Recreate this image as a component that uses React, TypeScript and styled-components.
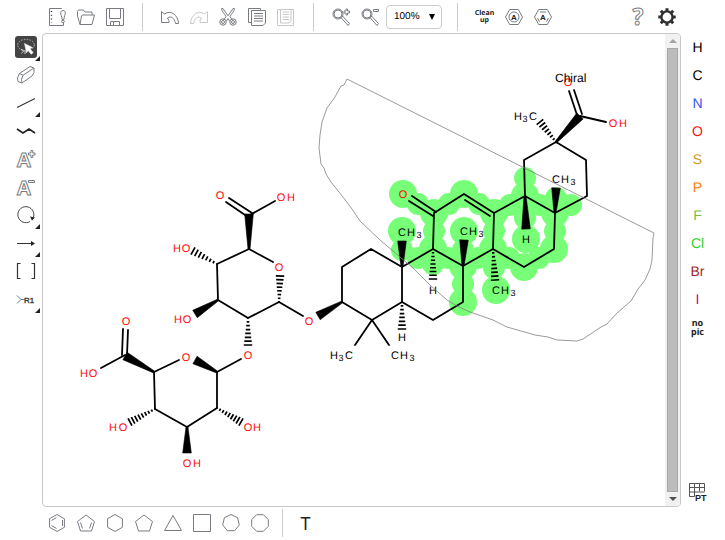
import React from "react";
import styled, { createGlobalStyle } from "styled-components";

const GlobalStyle = createGlobalStyle`
  * { box-sizing: border-box; }
  body { margin: 0; background: #fff; color: #333; font-family: "Liberation Sans", Arial, sans-serif; }
`;

const Page = styled.div`
  display: grid;
  grid-template-columns: 42px minmax(0, 1fr) 44px;
  grid-template-rows: 33px minmax(0, 1fr) 33px;
  height: 100vh;
`;

const TopBar = styled.header`
  grid-column: 1 / -1;
  display: flex;
  align-items: center;
  padding: 0 44px 0 42px;
`;

const BottomBar = styled.footer`
  grid-column: 1 / -1;
  display: flex;
  align-items: flex-start;
  padding: 2px 42px 0;
`;

const SideBar = styled.nav`
  display: flex;
  flex-direction: column;
  align-items: center;
`;

const LeftBar = styled(SideBar)`
  padding-left: 10px;
`;

const RightBar = styled(SideBar)`
  padding-right: 11px;
`;

const Spacer = styled.div`
  flex: 1;
`;

const Separator = styled.div<{ $tight?: boolean }>`
  width: 1px;
  height: 28px;
  background: #ccc;
  margin: ${(p) => (p.$tight ? "0 8px" : "0 12px 0 13px")};
`;

const IconButton = styled.button<{ $off?: boolean }>`
  display: flex;
  align-items: center;
  justify-content: center;
  width: 29px;
  height: 28px;
  padding: 0;
  border: 0;
  background: none;
  color: ${(p) => (p.$off ? "#c8c8c8" : "#787c82")};
  flex: none;
`;

const ToolButton = styled(IconButton)`
  position: relative;
  width: 28px;
`;

const ToolFace = styled.span<{ $active?: boolean }>`
  display: flex;
  align-items: center;
  justify-content: center;
  width: 22px;
  height: 22px;
  border-radius: 3px;
  background: ${(p) => (p.$active ? "#444" : "transparent")};
`;

const Corner = styled.span`
  position: absolute;
  right: 0;
  bottom: 0;
  border-left: 5px solid transparent;
  border-bottom: 5px solid #222;
`;

const ElementButton = styled(IconButton)<{ $color: string }>`
  color: ${(p) => p.$color};
  font: 14px "Liberation Sans", Arial, sans-serif;
  text-rendering: geometricPrecision;
`;

const WordButton = styled(IconButton)<{ $large?: boolean }>`
  color: #222;
  font: bold ${(p) => (p.$large ? "9px / 9px" : "7px / 7px")} "Noto Sans", "Open Sans", sans-serif;
  text-rendering: geometricPrecision;
  text-align: center;
`;

const TextButton = styled(IconButton)`
  color: #222;
  font: 18px "Noto Sans", "Open Sans", sans-serif;
`;

const TableButton = styled(IconButton)`
  margin-bottom: 1px;
`;

const ZoomBox = styled.div`
  position: relative;
  margin: 0 2px;
`;

const ZoomSelect = styled.select`
  appearance: none;
  display: block;
  width: 56px;
  height: 24px;
  padding: 0 7px;
  border: 1px solid #ccc;
  border-radius: 4px;
  background: #fff;
  color: #000;
  font: 10px "Liberation Sans", Arial, sans-serif;
  text-rendering: geometricPrecision;
`;

const ZoomArrow = styled.span`
  position: absolute;
  right: 7px;
  top: 9px;
  border: 3px solid transparent;
  border-top: 6px solid #000;
  border-bottom: 0;
  pointer-events: none;
`;

const Canvas = styled.main`
  display: flex;
  border: 1px solid #c8c8c8;
  border-radius: 4px;
  overflow: hidden;
`;

const Sheet = styled.svg`
  flex: 1;
  min-width: 0;
  height: 100%;
  font-family: "Liberation Sans", Arial, sans-serif;
  text-rendering: geometricPrecision;
`;

const ScrollTrack = styled.div`
  display: flex;
  flex-direction: column;
  align-items: center;
  width: 15px;
  background: #f1f1f1;
`;

const ScrollArrow = styled.div<{ $down?: boolean }>`
  display: flex;
  align-items: center;
  justify-content: center;
  height: 14px;
  &::after {
    content: "";
    border: 4px solid transparent;
    ${(p) => (p.$down ? "border-top-color: #505050; border-bottom: 0;" : "border-bottom-color: #a3a3a3; border-top: 0;")}
  }
`;

const ScrollThumb = styled.div`
  flex: 1;
  width: 11px;
  background: #bcbcbc;
  border: 1px solid #a8a8a8;
`;

/* ---------- icons ---------- */

const Icon = ({ children }: { children: React.ReactNode }) => (
  <svg width="18" height="18" viewBox="0 0 18 18" fill="none" stroke="currentColor" strokeWidth="1" aria-hidden="true" overflow="visible">
    {children}
  </svg>
);

const OutlineLetter = styled.text`
  font-family: "Open Sans", "Noto Sans", sans-serif;
  font-weight: bold;
  fill: #fff;
  stroke-width: 1px;
`;

const icons: Record<string, React.ReactNode> = {
  new: (
    <>
      <path d="M13.500 1V.5H1.500V17.500H15.500V15" />
      <path d="M3.500 3v12" strokeDasharray="1 2.800" strokeWidth="1.400" stroke="#333" />
      <path d="M15 2.500c1.300 0 2.300.9 2.300 2.300 0 2-1.100 3.500-1.400 6.700h-1.800c-.3-3.200-1.400-4.700-1.400-6.700 0-1.400 1-2.300 2.300-2.300z" />
      <circle cx="15" cy="13.500" r="1.300" />
    </>
  ),
  open: <path d="M3 16.500L.5 8V3.500l1-1.500h5l1.500 2h7v3M3 16.500h12L17.500 7h-12L4.500 8z" />,
  save: (
    <>
      <path d="M.5.500h17v17H.5z" />
      <path d="M3.500.5v10h11V.5M4.500 17.500v-4h9v4M7.500 14v3" />
    </>
  ),
  undo: <path d="M.5 3.500l3 2.500C10 1.500 17 7 17.500 15.500h-3C13.500 10 10 7.500 6.500 10l1.500 2.500v2H.5z" />,
  redo: <path d="M17.500 3.500l-3 2.500C8 1.500 1 7 .5 15.500h3C4.500 10 8 7.500 11.500 10L10 12.500v2h7.500z" />,
  cut: (
    <>
      <path d="M2.500.500L4 .6l5 7.200 5-7.200 1.500-.1c0 2-3 5.500-4.600 8.200l2.600 3M2.500.500c0 2 3 5.500 4.600 8.200L4.500 12M9 10.500L7.500 13M9 10.500l1.500 2.500" />
      <circle cx="4" cy="14" r="3.200" /><circle cx="4" cy="14" r="1.500" />
      <circle cx="14" cy="14" r="3.200" /><circle cx="14" cy="14" r="1.500" />
    </>
  ),
  copy: (
    <>
      <path d="M3.500 14.500h-3V.5h12v2" />
      <path d="M3.500 2.500h14V15L15 17.500H3.500zM6 5.500h9M6 8h9M6 10.500h9M6 13h9" />
    </>
  ),
  paste: (
    <>
      <path d="M.5 1.500h16v16H.5z" />
      <path d="M3.500 1v14h8.500l2-2V1M5.500 4h6.500M5.500 6.500h6.500M5.500 9h6.500M5.500 11.500h6.500" />
    </>
  ),
  zoomIn: (
    <>
      <circle cx="6" cy="6" r="5" /><circle cx="6" cy="6" r="4" />
      <path d="M9.500 9l1-1 7 7.500-1.500 2-7-8zM14 1v2h-2v2h2v2h1.500V5h2V3h-2V1z" />
    </>
  ),
  zoomOut: (
    <>
      <circle cx="6" cy="6" r="5" /><circle cx="6" cy="6" r="4" />
      <path d="M9.500 9l1-1 7 7.500-1.500 2-7-8zM12.500 1.500h5v2h-5z" />
    </>
  ),
  arom: (
    <>
      <path d="M4.700 1.500h8.600L17.500 9l-4.200 7.500H4.700L.5 9z" />
      <circle cx="9" cy="9" r="5" />
      <text x="9" y="12" fontSize="8" fontWeight="bold" textAnchor="middle" fill="#222" stroke="none">A</text>
    </>
  ),
  dearom: (
    <>
      <path d="M4.700 1.500h8.600L17.500 9l-4.200 7.500H4.700L.5 9zM6 4h6M3.500 10l2 3.800M14.500 10l-2 3.800" />
      <text x="9" y="12" fontSize="8" fontWeight="bold" textAnchor="middle" fill="#222" stroke="none">A</text>
    </>
  ),
  help: <OutlineLetter x="9" y="17" fontSize="23" textAnchor="middle">?</OutlineLetter>,
  gear: (
    <g stroke="#303030">
      <circle cx="9" cy="9" r="5.600" strokeWidth="2.400" />
      <path
        strokeWidth="3"
        d="M9 .3v2.700M9 15v2.700M.3 9H3M15 9h2.700M2.800 2.800l1.900 1.900M13.300 13.300l1.900 1.900M2.800 15.200l1.900-1.900M13.300 4.700l1.900-1.900"
      />
    </g>
  ),
  lasso: (
    <>
      <ellipse cx="9" cy="7" rx="8.300" ry="5.700" stroke="#b5b5b5" strokeDasharray="1.500 1.300" />
      <path d="M4 11.500l3 1-2.500 3M8 13v3" stroke="#ccc" />
      <path d="M7.500 5.500l8 4-2.500 1.300 3.200 3.700-2 1.700-3.200-3.700-1.500 2.300z" fill="#fff" stroke="#eee" strokeWidth=".6" />
    </>
  ),
  erase: <path d="M.5 12l2-4.500L13 .500l4 1.500v4.500l-2 3.500L5 17l-4-1.500zM2.500 7.500l3.500 1.800L17 2M6 9.300l-1.500 4L5 17" />,
  bond: <path d="M0 13.500L18 4.500" stroke="#333" strokeWidth="1.200" />,
  chain: <path d="M0 7l6 4 6-4 6 4" stroke="#222" strokeWidth="1.600" />,
  plus: (
    <>
      <OutlineLetter x="0" y="17" fontSize="20">A</OutlineLetter>
      <path d="M14 .5v2.500h-2.500v2H14v2.500h1.700V5h2.300V3h-2.300V.5z" fill="#fff" />
    </>
  ),
  minus: (
    <>
      <OutlineLetter x="0" y="17" fontSize="20">A</OutlineLetter>
      <path d="M11.500 2.500h6v2h-6z" fill="#fff" />
    </>
  ),
  rotate: (
    <>
      <path d="M13 15.500A8 8 0 1 1 16.500 11" stroke="#444" />
      <path d="M13 10.500l5 1-3 3z" fill="#222" stroke="none" />
    </>
  ),
  arrow: (
    <>
      <path d="M0 9.500h16" stroke="#333" />
      <path d="M14 7l4 2.500-4 2.500z" fill="#222" stroke="none" />
    </>
  ),
  bracket: <path d="M3.500 1.500h-3v15h3M14.500 1.500h3v15h-3" stroke="#333" strokeWidth="1.200" />,
  rgroup: (
    <>
      <path d="M0 5.500l4 4-4 4M4 9.500h3.500" stroke="#5577a8" />
      <text x="7" y="12.500" fontSize="8" stroke="#333" strokeWidth=".3" fill="#222">R1</text>
    </>
  ),
  table: (
    <>
      <path d="M.5.500h15v8M.5.500v13h5v-13M10.500.5v8M.5 4.500h15M.5 9h15" stroke="#555" />
      <text x="6" y="17.500" fontSize="9" fontWeight="bold" fill="#222" stroke="none">PT</text>
    </>
  ),
};

const ring = (n: number, start: number, r = 8.5) =>
  Array.from({ length: n }, (_, i) => {
    const a = ((start + (360 * i) / n) * Math.PI) / 180;
    return `${(9 + r * Math.cos(a)).toFixed(1)},${(9 + r * Math.sin(a)).toFixed(1)}`;
  }).join(" ");

const templates: { name: string; points: string; inner?: string }[] = [
  { name: "Benzene", points: ring(6, -90), inner: "M3.500 6.500L8.500 3.500M14.500 6v6M3.500 11.500l5 3" },
  { name: "Cyclopentadiene", points: "9,1 17.500,7.500 14.500,17 3.500,17 .5,7.500", inner: "M3.500 8.500l2 6M14.500 8.500l-2 6" },
  { name: "Cyclohexane", points: ring(6, -90) },
  { name: "Cyclopentane", points: "9,1 17.500,7.500 14.500,17 3.500,17 .5,7.500" },
  { name: "Cyclopropane", points: "9,1.500 17.500,16.500 .5,16.500" },
  { name: "Cyclobutane", points: ".5,.5 17.500,.5 17.500,17.500 .5,17.500" },
  { name: "Cycloheptane", points: ring(7, -90) },
  { name: "Cyclooctane", points: ring(8, -112.5, 9) },
];

const leftTools: [string, string, boolean][] = [
  ["lasso", "Lasso selection", true],
  ["erase", "Erase", false],
  ["bond", "Single bond", true],
  ["chain", "Chain", false],
  ["plus", "Charge plus", false],
  ["minus", "Charge minus", false],
  ["rotate", "Rotate", true],
  ["arrow", "Reaction arrow", true],
  ["bracket", "S-group", false],
  ["rgroup", "R-group label", true],
];

const elements: [string, string][] = [
  ["H", "#000"], ["C", "#000"], ["N", "#304ff7"], ["O", "#ff0d0d"], ["S", "#c99a19"],
  ["P", "#ff8000"], ["F", "#6fbf44"], ["Cl", "#1fd01f"], ["Br", "#a62929"], ["I", "#c0008f"],
];

/* ---------- molecule ---------- */

type Pt = [number, number];
type Pair = [Pt, Pt];

const atom: Record<string, Pt> = {
  a1: [556, 142], a2: [524, 160], a3: [525, 196], a4: [555, 213], a5: [587, 196], a6: [586, 160],
  b1: [494, 213], b2: [493, 249], b3: [524, 267], b4: [554, 249],
  c1: [464, 194], c2: [434, 213], c3: [433, 249], c4: [463, 266],
  d1: [402, 267], d2: [402, 302], d3: [433, 320], d4: [463, 302],
  e1: [371, 249], e2: [342, 267], e3: [342, 302], e4: [372, 320],
  s1: [249, 249], s2: [217, 264], s3: [218, 300], s4: [248, 318], s5: [279, 302],
  t1: [217, 372], t2: [154, 372], t3: [155, 409], t4: [187, 427], t5: [217, 408],
};

const chains = [
  "a1 a2 a3 a4 a5 a6 a1", "a3 b1 b2 b3 b4 a4", "b1 c1 c2 c3 c4 b2",
  "c3 d1 d2 d3 d4 c4", "d1 e1 e2 e3 e4 d2", "s1 s2 s3 s4 s5", "t2 t3 t4 t5 t1",
];

const bonds: Pair[] = [
  [[465, 200], [490, 216]],
  [[412, 196], [436, 212]], [[409, 201], [433, 216]],
  [[569, 91], [577, 115]], [[574, 90], [582, 114]],
  [[580, 116], [606, 122]],
  [[372, 320], [355, 345]], [[372, 320], [389, 345]],
  [[229, 198], [252, 213]], [[226, 202], [248, 217]],
  [[250, 215], [275, 201]],
  [[249, 249], [273, 262]], [[279, 302], [303, 316]],
  [[217, 372], [241, 359]], [[154, 372], [179, 360]],
  [[123, 329], [122, 355]], [[128, 330], [127, 355]],
  [[125, 355], [101, 368]],
];

const wedges: Pair[] = [
  [atom.a1, [580, 116]], [atom.a3, [526, 229]], [atom.a4, [556, 188]],
  [atom.c4, [464, 240]], [atom.d1, [402, 241]], [atom.e3, [318, 316]],
  [atom.s1, [249, 214]], [atom.s3, [195, 314]],
  [atom.t1, [195, 360]], [atom.t2, [125, 356]], [atom.t4, [187, 453]],
];

const hashes: Pair[] = [
  [atom.a1, [540, 122]], [atom.b2, [495, 280]], [atom.c3, [433, 279]], [atom.d2, [402, 329]],
  [atom.s2, [193, 251]], [atom.s4, [248, 345]], [atom.s5, [280, 276]],
  [atom.t3, [130, 422]], [atom.t5, [241, 422]],
];

const selectedAtoms: Pt[] = [
  [403, 194], atom.c1, atom.c2, atom.c3, atom.c4, atom.b1, atom.b2, atom.b3, atom.b4,
  atom.a3, atom.a4, atom.d4, [402, 231], [464, 231], [526, 239], [496, 290],
];

const selectedBonds: Pt[] = [
  [418, 204], [449, 204], [479, 204], [434, 231], [494, 231], [448, 258], [478, 258],
  [510, 205], [540, 205], [555, 231], [539, 258], [509, 258], [525, 178], [571, 205],
  [556, 198], [525, 218], [463, 250], [463, 284], [402, 250], [418, 258], [433, 264], [494, 268],
];

type Glyph = [string, number];
const RED = "#ff0d0d";
const labels: { y: number; color?: string; glyphs: Glyph[] }[] = [
  { y: 82, color: RED, glyphs: [["O", 568]] },
  { y: 123, color: RED, glyphs: [["O", 613], ["H", 623]] },
  { y: 116, glyphs: [["H", 518], ["3", 525], ["C", 533]] },
  { y: 179, glyphs: [["C", 556], ["H", 565], ["3", 573]] },
  { y: 194, color: RED, glyphs: [["O", 403]] },
  { y: 232, glyphs: [["C", 402], ["H", 411], ["3", 419]] },
  { y: 231, glyphs: [["C", 464], ["H", 473], ["3", 481]] },
  { y: 239, glyphs: [["H", 526]] },
  { y: 290, glyphs: [["C", 496], ["H", 505], ["3", 513]] },
  { y: 290, glyphs: [["H", 433]] },
  { y: 337, glyphs: [["H", 402]] },
  { y: 355, glyphs: [["H", 334], ["3", 341], ["C", 349]] },
  { y: 355, glyphs: [["C", 395], ["H", 404], ["3", 412]] },
  { y: 195, color: RED, glyphs: [["O", 220]] },
  { y: 197, color: RED, glyphs: [["O", 281], ["H", 291]] },
  { y: 248, color: RED, glyphs: [["H", 177], ["O", 186]] },
  { y: 267, color: RED, glyphs: [["O", 279]] },
  { y: 319, color: RED, glyphs: [["H", 178], ["O", 187]] },
  { y: 321, color: RED, glyphs: [["O", 309]] },
  { y: 355, color: RED, glyphs: [["O", 248]] },
  { y: 357, color: RED, glyphs: [["O", 186]] },
  { y: 321, color: RED, glyphs: [["O", 126]] },
  { y: 373, color: RED, glyphs: [["H", 84], ["O", 93]] },
  { y: 427, color: RED, glyphs: [["H", 113], ["O", 123]] },
  { y: 427, color: RED, glyphs: [["O", 248], ["H", 257]] },
  { y: 463, color: RED, glyphs: [["O", 187], ["H", 197]] },
];

const LASSO =
  "M347 79L344 85 341 86 335 97 327 108 322 122 320 135 319 148 321 164 324 168 326 174 331 182 343 197 352 209 360 221 380 240 400 257 413 268 430 285 447 300 457 306 470 312 493 320 507 327 535 335 548 337 557 340 577 341 583 339 601 327 607 324 617 313 631 301 638 289 645 280 650 269 652 260 653 238 654 233Z";

const wedgePath = ([[x1, y1], [x2, y2]]: Pair) => {
  const len = Math.hypot(x2 - x1, y2 - y1);
  const nx = -(y2 - y1) / len;
  const ny = (x2 - x1) / len;
  return `M${x1 + nx} ${y1 + ny}L${x2 + nx * 4.3} ${y2 + ny * 4.3}L${x2 - nx * 4.3} ${y2 - ny * 4.3}L${x1 - nx} ${y1 - ny}Z`;
};

const hashPath = ([[x1, y1], [x2, y2]]: Pair) => {
  const len = Math.hypot(x2 - x1, y2 - y1);
  const nx = -(y2 - y1) / len;
  const ny = (x2 - x1) / len;
  const count = Math.round(len / 3.7);
  let d = "";
  for (let i = 0; i <= count; i++) {
    const t = i / count;
    const w = 0.8 + 3.4 * t;
    const x = x1 + (x2 - x1) * t;
    const y = y1 + (y2 - y1) * t;
    d += `M${x + nx * w} ${y + ny * w}L${x - nx * w} ${y - ny * w}`;
  }
  return d;
};

const Molecule = () => (
  <Sheet role="img" aria-label="Chemical structure">
    <g transform="translate(-43 -34)">
      <g fill="#77ff77">
        {selectedAtoms.map(([x, y]) => <circle key={`${x}-${y}`} cx={x} cy={y} r="14" />)}
        {selectedBonds.map(([x, y]) => <circle key={`${x}-${y}`} cx={x} cy={y} r="11" />)}
      </g>
      <g fill="none" stroke="#000" strokeWidth="1.800" strokeLinecap="round" strokeLinejoin="round">
        {chains.map((c) => <polyline key={c} points={c.split(" ").map((k) => atom[k].join()).join(" ")} />)}
        {bonds.map(([a, b]) => <path key={`${a}-${b}`} d={`M${a}L${b}`} />)}
      </g>
      {wedges.map((w) => <path key={`${w}`} d={wedgePath(w)} fill="#000" stroke="#000" strokeWidth=".6" />)}
      {hashes.map((h) => <path key={`${h}`} d={hashPath(h)} stroke="#000" strokeWidth="1.700" />)}
      {labels.map(({ y, color = "#000", glyphs }) =>
        glyphs.map(([ch, x]) => (
          <text key={`${x}-${y}`} x={x} y={ch === "3" ? y + 6 : y + 4} fontSize={ch === "3" ? 9 : 11} textAnchor="middle" fill={color}>
            {ch}
          </text>
        )),
      )}
      <text x="555" y="82" fontSize="12">Chiral</text>
      <path d={LASSO} fill="none" stroke="#808080" strokeWidth=".8" />
    </g>
  </Sheet>
);

const Tool = ({ icon, label, off }: { icon: string; label: string; off?: boolean }) => (
  <IconButton aria-label={label} disabled={off} $off={off}>
    <Icon>{icons[icon]}</Icon>
  </IconButton>
);

export default function App() {
  return (
    <>
      <GlobalStyle />
      <Page>
        <TopBar>
          <Tool icon="new" label="New" />
          <Tool icon="open" label="Open" />
          <Tool icon="save" label="Save" />
          <Separator />
          <Tool icon="undo" label="Undo" />
          <Tool icon="redo" label="Redo" off />
          <Tool icon="cut" label="Cut" />
          <Tool icon="copy" label="Copy" />
          <Tool icon="paste" label="Paste" off />
          <Separator />
          <Tool icon="zoomIn" label="Zoom in" />
          <Tool icon="zoomOut" label="Zoom out" />
          <ZoomBox>
            <ZoomSelect aria-label="Zoom" defaultValue="100%">
              <option>50%</option>
              <option>100%</option>
              <option>200%</option>
            </ZoomSelect>
            <ZoomArrow />
          </ZoomBox>
          <Separator />
          <WordButton>Clean<br />up</WordButton>
          <Tool icon="arom" label="Aromatize" />
          <Tool icon="dearom" label="Dearomatize" />
          <Spacer />
          <Tool icon="help" label="Help" />
          <Tool icon="gear" label="Settings" />
        </TopBar>

        <LeftBar aria-label="Tools">
          {leftTools.map(([icon, label, more]) => (
            <ToolButton key={icon} aria-label={label}>
              <ToolFace $active={icon === "lasso"}>
                <Icon>{icons[icon]}</Icon>
              </ToolFace>
              {more && <Corner />}
            </ToolButton>
          ))}
        </LeftBar>

        <Canvas>
          <Molecule />
          <ScrollTrack>
            <ScrollArrow />
            <ScrollThumb />
            <ScrollArrow $down />
          </ScrollTrack>
        </Canvas>

        <RightBar aria-label="Elements">
          {elements.map(([symbol, color]) => (
            <ElementButton key={symbol} $color={color}>{symbol}</ElementButton>
          ))}
          <WordButton $large>no<br />pic</WordButton>
          <Spacer />
          <TableButton aria-label="Periodic table">
            <Icon>{icons.table}</Icon>
          </TableButton>
        </RightBar>

        <BottomBar>
          {templates.map(({ name, points, inner }) => (
            <IconButton key={name} aria-label={name}>
              <Icon>
                <polygon points={points} />
                {inner && <path d={inner} />}
              </Icon>
            </IconButton>
          ))}
          <Separator $tight />
          <TextButton>T</TextButton>
        </BottomBar>
      </Page>
    </>
  );
}
